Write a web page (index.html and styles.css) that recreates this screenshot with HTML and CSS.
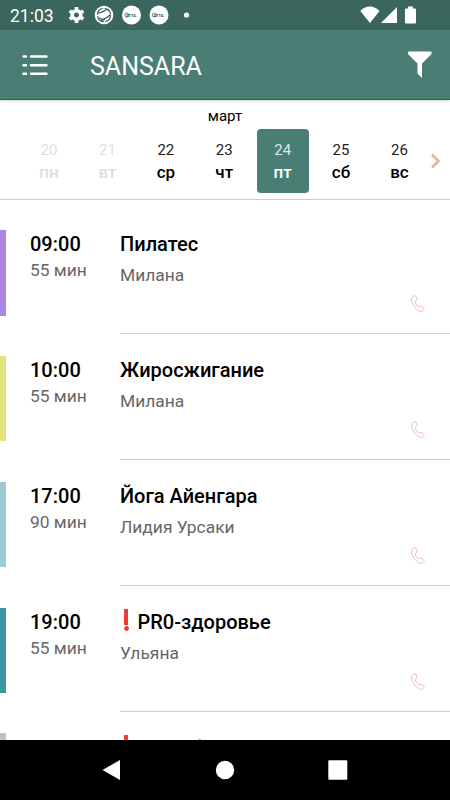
FILE: index.html
```
<!DOCTYPE html>
<html lang="ru">
  <head>
    <meta charset="UTF-8" />
    <meta name="viewport" content="width=device-width, initial-scale=1.0" />
    <title>SANSARA</title>
    <link rel="stylesheet" href="styles.css">
  </head>
  <body>
    <svg width="0" height="0" class="defs">
      <symbol id="phone" viewBox="0 0 14 18">
        <path d="M1.3 2.3C2.2 1 4 .6 4.8 1.2c.8.8 1.2 2.4 1.2 3.3 0 1-1.5 1.3-1.7 2.2-.2 1.3 1.8 4.5 3 5.1 1 .4 1.8-.8 2.8-.5 1.1.3 2.6 1.5 2.9 2.4.3 1-1.1 2.6-2.7 2.8C6.6 16.8.5 9.2.6 4.5.6 3.6.8 2.9 1.3 2.3Z" />
      </symbol>
    </svg>
    <div class="status">
      <span class="clock">21:03</span>
      <svg class="notifications" width="126" height="30" viewBox="0 0 126 30">
        <g class="gear" transform="translate(10.5 15)">
          <circle r="4.3" />
          <path d="M0-8V-4M0 8V4M-6.9-4-3.5-2M6.9 4 3.5 2M6.9-4 3.5-2M-6.9 4-3.5 2" />
        </g>
        <circle cx="38" cy="15" r="9.3" fill="#fff" />
        <circle class="swirl" cx="38" cy="15" r="6.6" stroke-dasharray="9 1.5" />
        <path class="swirl" d="M32 13c3-1 4 0 6-2s4-1 5-1M33 18c2 0 3 2 5 1s4-2 6-4M35 20.5l4-1" />
        <circle cx="65.5" cy="15" r="9.5" fill="#fff" />
        <circle class="mark" cx="60.8" cy="15" r="2" />
        <text x="60" y="17">ATTA.</text>
        <circle cx="93" cy="15" r="9.5" fill="#fff" />
        <circle class="mark" cx="88.3" cy="15" r="2" />
        <text x="87.5" y="17">ATTA.</text>
        <circle cx="120.5" cy="15" r="2.6" fill="#fff" />
      </svg>
      <svg class="signals" width="58" height="30" viewBox="0 0 58 30" fill="#fff">
        <path d="M.3 11C5.5 5 14 5 19.5 11L10 23Z" />
        <path d="M21 23 37 7V23Z" />
        <path d="M46 8.5h2V6.5h5V8.5h2q1 0 1 1v13q0 1-1 1h-9q-1 0-1-1V9.5q0-1 1-1Z" />
      </svg>
    </div>
    <header>
      <svg class="menu" width="26" height="22" viewBox="0 0 26 22">
        <path d="M1.5 2.5h2.5M9 2.5h15.500M1.5 11.2h2.5M9 11.2h15.500M1.5 19.8h2.5M9 19.8h15.500" />
      </svg>
      <h1>SANSARA</h1>
      <svg class="filter" width="24" height="28" viewBox="0 0 24 28">
        <path d="M0 1.5Q0 .5 1 .5H22.5Q23.500.5 23.5 1.5V3L14 12.5V27L9.5 22.5V12.5L0 3Z" fill="#fff" />
      </svg>
    </header>
    <div class="calendar">
      <div class="month">март</div>
      <div class="week">
        <div class="day past"><span>20</span><b>пн</b></div>
        <div class="day past"><span>21</span><b>вт</b></div>
        <div class="day"><span>22</span><b>ср</b></div>
        <div class="day"><span>23</span><b>чт</b></div>
        <div class="day active"><span>24</span><b>пт</b></div>
        <div class="day"><span>25</span><b>сб</b></div>
        <div class="day"><span>26</span><b>вс</b></div>
        <svg class="next" width="12" height="16" viewBox="0 0 12 16">
          <path d="M2 1.5 8.5 8 2 14.5" />
        </svg>
      </div>
    </div>
    <main>
      <div class="lesson purple">
        <div class="time"><b>09:00</b><span>55 мин</span></div>
        <div class="info">
          <h2>Пилатес</h2>
          <p>Милана</p>
          <svg class="phone"><use href="#phone" /></svg>
        </div>
      </div>
      <div class="lesson yellow">
        <div class="time"><b>10:00</b><span>55 мин</span></div>
        <div class="info">
          <h2>Жиросжигание</h2>
          <p>Милана</p>
          <svg class="phone"><use href="#phone" /></svg>
        </div>
      </div>
      <div class="lesson blue">
        <div class="time"><b>17:00</b><span>90 мин</span></div>
        <div class="info">
          <h2>Йога Айенгара</h2>
          <p>Лидия Урсаки</p>
          <svg class="phone"><use href="#phone" /></svg>
        </div>
      </div>
      <div class="lesson teal">
        <div class="time"><b>19:00</b><span>55 мин</span></div>
        <div class="info">
          <h2><i class="alert"></i>PR0-здоровье</h2>
          <p>Ульяна</p>
          <svg class="phone"><use href="#phone" /></svg>
        </div>
      </div>
      <div class="lesson gray">
        <div class="time"></div>
        <div class="info">
          <h2><i class="alert"></i>Разгибание</h2>
        </div>
      </div>
    </main>
    <nav>
      <svg width="20" height="22" viewBox="0 0 20 22"><path d="M17 1V21L-.5 11Z" /></svg>
      <svg width="20" height="22" viewBox="0 0 20 22"><circle cx="10" cy="11" r="9.2" /></svg>
      <svg width="20" height="22" viewBox="0 0 20 22"><rect x=".3" y="1.3" width="19" height="19.4" rx="1" /></svg>
    </nav>
  </body>
</html>
```

FILE: styles.css
```
* {
  box-sizing: border-box;
}
body {
  margin: 0;
  height: 800px;
  display: flex;
  flex-direction: column;
  overflow: hidden;
  background: #fff;
  font-family: Roboto, "Noto Sans", sans-serif;
  color: #000;
}
svg {
  display: block;
  flex-shrink: 0;
  overflow: visible;
}
.defs {
  position: absolute;
}
.status {
  height: 30px;
  flex-shrink: 0;
  display: flex;
  align-items: center;
  padding: 0 33px 0 10px;
  background: #3b665e;
  color: #fff;
}
.clock {
  width: 56px;
  padding-top: 1px;
  font-size: 17.5px;
  line-height: 30px;
}
.notifications text {
  font-size: 4px;
  font-weight: 700;
  fill: #31584f;
}
.gear {
  fill: none;
  stroke: #fff;
  stroke-width: 3.6;
}
.swirl {
  fill: none;
  stroke: #31584f;
  stroke-width: 1.1;
}
.mark {
  fill: none;
  stroke: #31584f;
  stroke-width: .7;
}
.signals {
  margin-left: auto;
  margin-right: -1px;
}
header {
  height: 70px;
  flex-shrink: 0;
  display: flex;
  align-items: center;
  padding: 0 18px 0 22px;
  background: #4a7e75;
  border-bottom: 1px solid #15695e;
  box-shadow: 0 1px 3px rgba(0, 0, 0, .18);
  color: #fff;
}
.menu {
  margin-right: 42px;
  fill: none;
  stroke: #fff;
  stroke-width: 2.4;
  stroke-linecap: round;
}
h1 {
  margin: 4px 0 0;
  font-size: 25px;
  font-weight: 400;
}
.filter {
  margin-left: auto;
}
.calendar {
  height: 100px;
  flex-shrink: 0;
  padding-top: 7px;
  border-bottom: 1px solid #ccc;
}
.month {
  height: 22px;
  font-size: 15px;
  line-height: 19px;
  text-align: center;
}
.week {
  display: grid;
  grid-template-columns: repeat(7, 58.4px) 12px;
  align-items: center;
  padding-left: 19.9px;
}
.day {
  width: 52px;
  height: 64px;
  margin: 0 auto;
  padding-top: 11px;
  border-radius: 4px;
  text-align: center;
}
.day span,
.day b {
  display: block;
}
.day span {
  font-size: 15px;
  line-height: 21px;
  color: #222;
}
.day b {
  font-size: 17px;
  font-weight: 500;
  line-height: 23px;
}
.day.past span,
.day.past b {
  color: #ddd;
}
.day.active {
  background: #4a7e75;
  color: #fff;
}
.day.active span {
  color: #dce7e5;
}
.next {
  margin-left: 1px;
  fill: none;
  stroke: #e8b3a2;
  stroke-width: 2.6;
}
main {
  flex: 1;
  min-height: 0;
  overflow: hidden;
  padding-top: 30px;
}
.lesson {
  display: flex;
  height: 125.85px;
}
.lesson::before {
  content: "";
  width: 6px;
  height: 85.6px;
  background: #c0c0c0;
}
.purple::before {
  background: #aa86e2;
}
.yellow::before {
  background: #e4e37b;
}
.blue::before {
  background: #9dcbd2;
}
.teal::before {
  background: #3d96a5;
}
.time {
  width: 114px;
  padding: 2px 0 0 24px;
}
.time b,
.time span {
  display: block;
}
.time b {
  font-size: 20px;
  font-weight: 500;
  line-height: 25px;
}
.time span {
  font-size: 17.4px;
  line-height: 26px;
  color: #666;
}
.info {
  flex: 1;
  height: 104.4px;
  padding: 2px 25px 0 0;
  border-bottom: 1px solid #ccc;
}
h2 {
  display: flex;
  margin: 0;
  font-size: 20px;
  font-weight: 500;
  line-height: 25px;
}
.gray h2 {
  padding-top: 1px;
}
.info p {
  margin: 5px 0 0;
  font-size: 17.4px;
  line-height: 26px;
  color: #666;
}
.phone {
  width: 14px;
  height: 18px;
  margin: 7px 0 0 auto;
  fill: none;
  stroke: #e8b3a2;
  stroke-width: .9;
}
/* red exclamation mark before the title */
.alert {
  width: 5px;
  height: 22px;
  margin: -1px 9px 0 3.5px;
  background:
    radial-gradient(circle at 2.5px 19.5px, #f43737 2px, transparent 2.6px),
    linear-gradient(#f43737, #f43737) 0.5px 0 / 4px 16px no-repeat;
}
nav {
  height: 60px;
  flex-shrink: 0;
  display: flex;
  align-items: center;
  justify-content: center;
  gap: 92.5px;
  background: #000;
  fill: #fff;
}
```
